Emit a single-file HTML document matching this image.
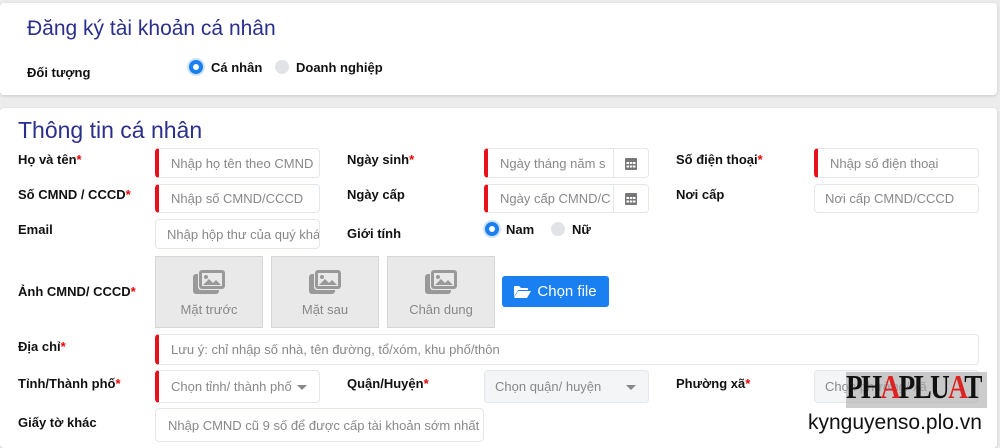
<!DOCTYPE html>
<html><head><meta charset="utf-8"><style>
*{box-sizing:border-box;margin:0;padding:0}
body{width:1000px;height:445px;overflow:hidden;background:#ececec;font-family:"Liberation Sans",sans-serif;position:relative;color:#222}
.card{position:absolute;background:#fff;left:0;width:997px;border-radius:4px;box-shadow:0 1px 3px rgba(0,0,0,.15)}
.a{position:absolute;white-space:nowrap}
.h{color:#2b2f8c;font-weight:normal}
.l{font-size:13px;font-weight:bold;color:#111}
.l i{color:#e00;font-style:normal}
.in{position:absolute;border:1px solid #e3e6ea;border-radius:4px;background:#fff;font-size:13px;color:#888;padding-left:14px;display:flex;align-items:center;overflow:hidden;white-space:nowrap}
.req{border-left:4px solid #e8101a;padding-left:12px}
.grey{background:#f4f5f7}
.cal{position:absolute;right:0;top:0;bottom:0;width:35px;border-left:1px solid #e3e6ea;display:flex;align-items:center;justify-content:center;background:#fff}
.rad{position:absolute;width:14px;height:14px;border-radius:50%}
.on{background:#fff;border:4px solid #1a7ff0;box-shadow:0 0 0 2px #cfe3fb}
.off{background:#e1e3e6}
.img{position:absolute;top:256px;width:108px;height:72px;background:#e9e9e9;border:1px solid #d6d6d6;font-size:13px;color:#888;text-align:center}
.caret{position:absolute;right:12px;top:14px;border:5px solid transparent;border-top-color:#888}
</style></head><body>
<div class="card" style="top:3px;height:92px"></div>
<div class="card" style="top:108px;height:340px"></div>

<div class="a h" style="left:27px;top:17px;font-size:21px">Đăng ký tài khoản cá nhân</div>
<div class="a l" style="left:27px;top:65px">Đối tượng</div>
<div class="rad on" style="left:189px;top:60px"></div>
<div class="a l" style="left:211px;top:60px">Cá nhân</div>
<div class="rad off" style="left:275px;top:60px"></div>
<div class="a l" style="left:296px;top:60px">Doanh nghiệp</div>

<div class="a h" style="left:18px;top:117px;font-size:23px">Thông tin cá nhân</div>

<div class="a l" style="left:18px;top:152px">Họ và tên<i>*</i></div>
<div class="in req" style="left:155px;top:148px;width:165px;height:30px">Nhập họ tên theo CMND</div>
<div class="a l" style="left:347px;top:152px">Ngày sinh<i>*</i></div>
<div class="in req" style="left:484px;top:148px;width:165px;height:30px">Ngày tháng năm s<div class="cal"><svg width="12" height="13" viewBox="0 0 12 13"><rect x="0" y="1" width="12" height="12" rx="1" fill="#777"/><g fill="#fff"><rect x="1.5" y="5" width="2.5" height="2"/><rect x="4.8" y="5" width="2.5" height="2"/><rect x="8" y="5" width="2.5" height="2"/><rect x="1.5" y="8.5" width="2.5" height="2"/><rect x="4.8" y="8.5" width="2.5" height="2"/><rect x="8" y="8.5" width="2.5" height="2"/></g></svg></div></div>
<div class="a l" style="left:676px;top:152px">Số điện thoại<i>*</i></div>
<div class="in req" style="left:814px;top:148px;width:165px;height:30px">Nhập số điện thoại</div>

<div class="a l" style="left:18px;top:187px">Số CMND / CCCD<i>*</i></div>
<div class="in req" style="left:155px;top:184px;width:165px;height:29px">Nhập số CMND/CCCD</div>
<div class="a l" style="left:347px;top:187px">Ngày cấp</div>
<div class="in req" style="left:484px;top:184px;width:165px;height:29px">Ngày cấp CMND/C<div class="cal"><svg width="12" height="13" viewBox="0 0 12 13"><rect x="0" y="1" width="12" height="12" rx="1" fill="#777"/><g fill="#fff"><rect x="1.5" y="5" width="2.5" height="2"/><rect x="4.8" y="5" width="2.5" height="2"/><rect x="8" y="5" width="2.5" height="2"/><rect x="1.5" y="8.5" width="2.5" height="2"/><rect x="4.8" y="8.5" width="2.5" height="2"/><rect x="8" y="8.5" width="2.5" height="2"/></g></svg></div></div>
<div class="a l" style="left:676px;top:187px">Nơi cấp</div>
<div class="in" style="left:814px;top:184px;width:165px;height:29px;padding-left:10px">Nơi cấp CMND/CCCD</div>

<div class="a l" style="left:18px;top:222px">Email</div>
<div class="in" style="left:155px;top:219px;width:165px;height:30px;padding-left:11px">Nhập hộp thư của quý khá</div>
<div class="a l" style="left:347px;top:226px">Giới tính</div>
<div class="rad on" style="left:485px;top:222px"></div>
<div class="a l" style="left:506px;top:222px">Nam</div>
<div class="rad off" style="left:551px;top:222px"></div>
<div class="a l" style="left:572px;top:222px">Nữ</div>

<div class="a l" style="left:18px;top:284px">Ảnh CMND/ CCCD<i>*</i></div>
<div class="img" style="left:155px"><svg style="margin-top:13px" width="32" height="24" viewBox="0 0 32 24"><rect x="0" y="4" width="26" height="20" rx="3" fill="#999"/><rect x="5" y="0" width="27" height="20" rx="3" fill="#e9e9e9"/><rect x="6" y="0" width="26" height="19" rx="3" fill="#999"/><rect x="9" y="3" width="20" height="13" fill="#e9e9e9"/><circle cx="13" cy="7" r="2" fill="#999"/><path d="M10 15l6-6 4 4 3-3 5 5z" fill="#999"/></svg><div style="margin-top:5px">Mặt trước</div></div>
<div class="img" style="left:271px"><svg style="margin-top:13px" width="32" height="24" viewBox="0 0 32 24"><rect x="0" y="4" width="26" height="20" rx="3" fill="#999"/><rect x="5" y="0" width="27" height="20" rx="3" fill="#e9e9e9"/><rect x="6" y="0" width="26" height="19" rx="3" fill="#999"/><rect x="9" y="3" width="20" height="13" fill="#e9e9e9"/><circle cx="13" cy="7" r="2" fill="#999"/><path d="M10 15l6-6 4 4 3-3 5 5z" fill="#999"/></svg><div style="margin-top:5px">Mặt sau</div></div>
<div class="img" style="left:387px"><svg style="margin-top:13px" width="32" height="24" viewBox="0 0 32 24"><rect x="0" y="4" width="26" height="20" rx="3" fill="#999"/><rect x="5" y="0" width="27" height="20" rx="3" fill="#e9e9e9"/><rect x="6" y="0" width="26" height="19" rx="3" fill="#999"/><rect x="9" y="3" width="20" height="13" fill="#e9e9e9"/><circle cx="13" cy="7" r="2" fill="#999"/><path d="M10 15l6-6 4 4 3-3 5 5z" fill="#999"/></svg><div style="margin-top:5px">Chân dung</div></div>
<div class="a" style="left:502px;top:276px;width:107px;height:31px;background:#1a7ff0;border-radius:3px;color:#fff;font-size:15px;display:flex;align-items:center;justify-content:center;gap:6px"><svg width="17" height="13" viewBox="0 0 17 13"><path d="M0 2a1 1 0 0 1 1-1h4l2 2h6a1 1 0 0 1 1 1v1H4L0 12z" fill="#fff"/><path d="M4 6h13l-4 7H0z" fill="#fff"/></svg>Chọn file</div>

<div class="a l" style="left:18px;top:339px">Địa chỉ<i>*</i></div>
<div class="in req" style="left:155px;top:334px;width:824px;height:31px">Lưu ý: chỉ nhập số nhà, tên đường, tổ/xóm, khu phố/thôn</div>

<div class="a l" style="left:18px;top:376px">Tỉnh/Thành phố<i>*</i></div>
<div class="in req" style="left:155px;top:370px;width:165px;height:33px">Chọn tỉnh/ thành phố<div class="caret"></div></div>
<div class="a l" style="left:347px;top:376px">Quận/Huyện<i>*</i></div>
<div class="in grey" style="left:484px;top:370px;width:165px;height:33px;padding-left:10px">Chọn quận/ huyện<div class="caret"></div></div>
<div class="a l" style="left:676px;top:376px">Phường xã<i>*</i></div>
<div class="in grey" style="left:814px;top:370px;width:165px;height:33px;padding-left:10px">Chọn phường/ xã</div>

<div class="a l" style="left:18px;top:415px">Giấy tờ khác</div>
<div class="in" style="left:155px;top:408px;width:329px;height:34px;padding-left:12px">Nhập CMND cũ 9 số để được cấp tài khoản sớm nhất</div>

<div class="a" style="left:846px;top:372px;width:141px;height:36px;background:rgba(170,170,170,.6)"></div>
<div class="a" style="left:846px;top:371px;font-family:'Liberation Serif',serif;font-weight:bold;font-size:34px;color:#111;letter-spacing:-2px;line-height:34px;transform:scaleX(0.8);transform-origin:left top">PH<span style="color:#d22">A</span>PLU<span style="color:#d22">A</span>T</div>
<div class="a" style="left:808px;top:411px;font-size:21px;color:#111">kynguyenso.plo.vn</div>
</body></html>
